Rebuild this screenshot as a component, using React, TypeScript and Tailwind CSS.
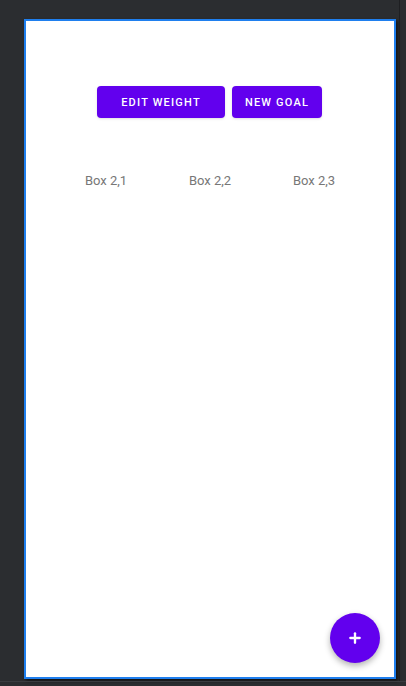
import { Plus } from 'lucide-react'

export default function App() {
  return (
    <div className="relative w-[406px] h-[686px] overflow-hidden bg-[#2b2d30]" style={{ fontFamily: 'Roboto, "Noto Sans", sans-serif' }}>
      {/* device preview */}
      <div className="ml-[24px] mt-[19px] w-[372px] h-[660px] border-2 border-[#1f7fee] shadow-[2px_2px_3px_rgba(0,0,0,0.6)]">
        <div className="relative h-full bg-white">
          <div className="flex justify-center gap-[7px] pt-[65px] pr-[1px]">
            <button className="w-[128px] h-[32px] pt-[2px] rounded-[4px] bg-[#6200ee] text-white text-[11px] font-medium tracking-[1.2px] shadow-sm">
              EDIT WEIGHT
            </button>
            <button className="w-[90px] h-[32px] pt-[2px] rounded-[4px] bg-[#6200ee] text-white text-[11px] font-medium tracking-[1.2px] shadow-sm">
              NEW GOAL
            </button>
          </div>

          <div className="mx-auto mt-[55px] grid w-[312px] grid-cols-3 text-center text-[13px] leading-[16px] text-[#777777]">
            <span>Box 2,1</span>
            <span>Box 2,2</span>
            <span>Box 2,3</span>
          </div>

          {/* FAB */}
          <button className="absolute right-[14px] bottom-[14px] flex h-[50px] w-[50px] items-center justify-center rounded-full bg-[#6200ee] text-white shadow-[0_3px_6px_rgba(0,0,0,0.3)]">
            <Plus size={16} strokeWidth={3.5} />
          </button>
        </div>
      </div>
      <div className="absolute left-0 right-0 top-[681px] h-px bg-[#3a3c40]" />
      <div className="absolute top-0 bottom-[5px] left-[399px] w-px bg-[#1e1f22]" />
    </div>
  )
}
